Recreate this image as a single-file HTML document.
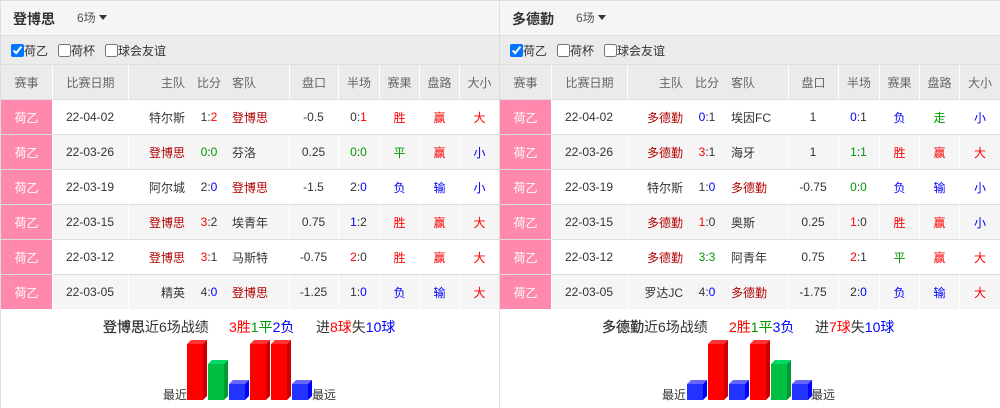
<!DOCTYPE html>
<html><head><meta charset="utf-8"><style>
html,body{margin:0;padding:0;background:#fff}
body{width:1000px;height:408px;position:relative;overflow:hidden;font:12px "Liberation Sans","Noto Sans CJK SC",sans-serif;color:#333}
.p{position:absolute;top:0;height:408px;box-sizing:border-box;border-top:1px solid #ddd}
#L{left:0;width:500px;border-left:1px solid #ddd;border-right:1px solid #ddd}
#R{left:500px;width:500px}
.t{height:34px;background:#f5f5f5;border-bottom:1px solid #ddd;position:relative}
.t b{position:absolute;left:12px;top:8px;font-size:14px;line-height:20px;color:#333}
.t span{position:absolute;left:76px;top:7px;line-height:20px;color:#555}
.t i{position:absolute;left:98px;top:14px;width:0;height:0;border:4px solid transparent;border-top:5px solid #333;border-bottom:0}
.f{height:28px;background:#ebebeb;border-bottom:1px solid #ddd;position:relative}
.f input{position:absolute;top:8px;margin:0;width:13px;height:13px}
.f span{position:absolute;top:7px;line-height:17px;color:#333}
table{border-collapse:separate;border-spacing:0;table-layout:fixed;width:100%}
td,th{padding:0;font-weight:normal;text-align:center;height:34px;border-bottom:1px solid #ddd;white-space:nowrap;box-sizing:content-box}
th{background:#ebebeb;color:#666}
tr:nth-child(even) td{background:#f5f5f5}
tr:nth-child(odd) td{background:#fff}
td:last-child,th:last-child{border-right:0}
.w{border-right:1px solid #fff}
td.e{background:#ff88ad!important;color:#fff;border-right:1px solid #fff;border-bottom:1px solid #ddd;font-size:12px}
.h{text-align:right;padding-right:2px}
.a{text-align:left;padding-left:1px}
#R .a{padding-left:2px}
td:nth-child(2),td:nth-child(6),td:nth-child(7){padding-right:1px}
tbody tr:last-child td{border-bottom:0}
.r{color:#f00}.b{color:#00f}.g{color:#090}.n{color:#b00000}
.s{position:absolute;top:318px;font-size:14px;line-height:18px;white-space:nowrap}
.l{position:absolute;top:387px;line-height:16px;font-size:12px;color:#333}
svg{position:absolute;left:0;top:0}
</style></head><body>

<div class="p" id="L">
<div class="t"><b>登博思</b><span>6场</span><i></i></div>
<div class="f"><input type="checkbox" checked style="left:10px"><span style="left:23px">荷乙</span><input type="checkbox" style="left:57px"><span style="left:70px">荷杯</span><input type="checkbox" style="left:104px"><span style="left:117px">球会友谊</span></div>
<table><colgroup><col style="width:52px"><col style="width:76px"><col style="width:58px"><col style="width:44px"><col style="width:59px"><col style="width:49px"><col style="width:41px"><col style="width:40px"><col style="width:40px"><col style="width:39px"></colgroup>
<thead><tr><th class="w">赛事</th><th class="w">比赛日期</th><th class="h">主队</th><th>比分</th><th class="a w">客队</th><th class="w">盘口</th><th class="w">半场</th><th class="w">赛果</th><th class="w">盘路</th><th>大小</th></tr></thead>
<tbody>
<tr><td class="e">荷乙</td><td class="w">22-04-02</td><td class="h">特尔斯</td><td>1:<span class="r">2</span></td><td class="a w n">登博思</td><td class="w">-0.5</td><td class="w">0:<span class="r">1</span></td><td class="w r">胜</td><td class="w r">赢</td><td class="r">大</td></tr>
<tr><td class="e">荷乙</td><td class="w">22-03-26</td><td class="h n">登博思</td><td><span class="g">0</span>:<span class="g">0</span></td><td class="a w">芬洛</td><td class="w">0.25</td><td class="w"><span class="g">0</span>:<span class="g">0</span></td><td class="w g">平</td><td class="w r">赢</td><td class="b">小</td></tr>
<tr><td class="e">荷乙</td><td class="w">22-03-19</td><td class="h">阿尔城</td><td>2:<span class="b">0</span></td><td class="a w n">登博思</td><td class="w">-1.5</td><td class="w">2:<span class="b">0</span></td><td class="w b">负</td><td class="w b">输</td><td class="b">小</td></tr>
<tr><td class="e">荷乙</td><td class="w">22-03-15</td><td class="h n">登博思</td><td><span class="r">3</span>:2</td><td class="a w">埃青年</td><td class="w">0.75</td><td class="w"><span class="b">1</span>:2</td><td class="w r">胜</td><td class="w r">赢</td><td class="r">大</td></tr>
<tr><td class="e">荷乙</td><td class="w">22-03-12</td><td class="h n">登博思</td><td><span class="r">3</span>:1</td><td class="a w">马斯特</td><td class="w">-0.75</td><td class="w"><span class="r">2</span>:0</td><td class="w r">胜</td><td class="w r">赢</td><td class="r">大</td></tr>
<tr><td class="e">荷乙</td><td class="w">22-03-05</td><td class="h">精英</td><td>4:<span class="b">0</span></td><td class="a w n">登博思</td><td class="w">-1.25</td><td class="w">1:<span class="b">0</span></td><td class="w b">负</td><td class="w b">输</td><td class="r">大</td></tr>
</tbody></table>
</div>

<div class="p" id="R">
<div class="t"><b>多德勤</b><span>6场</span><i></i></div>
<div class="f"><input type="checkbox" checked style="left:10px"><span style="left:23px">荷乙</span><input type="checkbox" style="left:57px"><span style="left:70px">荷杯</span><input type="checkbox" style="left:104px"><span style="left:117px">球会友谊</span></div>
<table><colgroup><col style="width:52px"><col style="width:76px"><col style="width:57px"><col style="width:44px"><col style="width:60px"><col style="width:50px"><col style="width:41px"><col style="width:40px"><col style="width:40px"><col style="width:40px"></colgroup>
<thead><tr><th class="w">赛事</th><th class="w">比赛日期</th><th class="h">主队</th><th>比分</th><th class="a w">客队</th><th class="w">盘口</th><th class="w">半场</th><th class="w">赛果</th><th class="w">盘路</th><th>大小</th></tr></thead>
<tbody>
<tr><td class="e">荷乙</td><td class="w">22-04-02</td><td class="h n">多德勤</td><td><span class="b">0</span>:1</td><td class="a w">埃因FC</td><td class="w">1</td><td class="w"><span class="b">0</span>:1</td><td class="w b">负</td><td class="w g">走</td><td class="b">小</td></tr>
<tr><td class="e">荷乙</td><td class="w">22-03-26</td><td class="h n">多德勤</td><td><span class="r">3</span>:1</td><td class="a w">海牙</td><td class="w">1</td><td class="w"><span class="g">1</span>:<span class="g">1</span></td><td class="w r">胜</td><td class="w r">赢</td><td class="r">大</td></tr>
<tr><td class="e">荷乙</td><td class="w">22-03-19</td><td class="h">特尔斯</td><td>1:<span class="b">0</span></td><td class="a w n">多德勤</td><td class="w">-0.75</td><td class="w"><span class="g">0</span>:<span class="g">0</span></td><td class="w b">负</td><td class="w b">输</td><td class="b">小</td></tr>
<tr><td class="e">荷乙</td><td class="w">22-03-15</td><td class="h n">多德勤</td><td><span class="r">1</span>:0</td><td class="a w">奥斯</td><td class="w">0.25</td><td class="w"><span class="r">1</span>:0</td><td class="w r">胜</td><td class="w r">赢</td><td class="b">小</td></tr>
<tr><td class="e">荷乙</td><td class="w">22-03-12</td><td class="h n">多德勤</td><td><span class="g">3</span>:<span class="g">3</span></td><td class="a w">阿青年</td><td class="w">0.75</td><td class="w"><span class="r">2</span>:1</td><td class="w g">平</td><td class="w r">赢</td><td class="r">大</td></tr>
<tr><td class="e">荷乙</td><td class="w">22-03-05</td><td class="h">罗达JC</td><td>4:<span class="b">0</span></td><td class="a w n">多德勤</td><td class="w">-1.75</td><td class="w">2:<span class="b">0</span></td><td class="w b">负</td><td class="w b">输</td><td class="r">大</td></tr>
</tbody></table>
</div>

<div class="s" style="left:103px"><span style="-webkit-text-stroke:.3px #333">登博思</span>近6场战绩</div>
<div class="s" style="left:229px"><span class="r">3胜</span><span class="g">1平</span><span class="b">2负</span></div>
<div class="s" style="left:316px">进<span class="r">8球</span>失<span class="b">10球</span></div>
<div class="s" style="left:602px"><span style="-webkit-text-stroke:.3px #333">多德勤</span>近6场战绩</div>
<div class="s" style="left:729px"><span class="r">2胜</span><span class="g">1平</span><span class="b">3负</span></div>
<div class="s" style="left:815px">进<span class="r">7球</span>失<span class="b">10球</span></div>
<div class="l" style="left:163px">最近</div><div class="l" style="left:312px">最远</div>
<div class="l" style="left:662px">最近</div><div class="l" style="left:811px">最远</div>

<svg width="1000" height="408" xmlns="http://www.w3.org/2000/svg">
<defs>
<g id="rb"><path d="M0 4l4-4h16l-4 4z" fill="#ff3333"/><path d="M16 4l4-4v56l-4 4z" fill="#cc0000"/><rect y="4" width="16" height="56" fill="#f00"/></g>
<g id="gb"><path d="M0 4l4-4h16l-4 4z" fill="#00d966"/><path d="M16 4l4-4v36l-4 4z" fill="#009933"/><rect y="4" width="16" height="36" fill="#00c044"/></g>
<g id="bb"><path d="M0 4l4-4h16l-4 4z" fill="#6666ff"/><path d="M16 4l4-4v16l-4 4z" fill="#0000ff"/><rect y="4" width="16" height="16" fill="#2233ff"/></g>
</defs>
<use href="#rb" x="187" y="340"/><use href="#gb" x="208" y="360"/><use href="#bb" x="229" y="380"/><use href="#rb" x="250" y="340"/><use href="#rb" x="271" y="340"/><use href="#bb" x="292" y="380"/>
<use href="#bb" x="687" y="380"/><use href="#rb" x="708" y="340"/><use href="#bb" x="729" y="380"/><use href="#rb" x="750" y="340"/><use href="#gb" x="771" y="360"/><use href="#bb" x="792" y="380"/>
</svg>
</body></html>
